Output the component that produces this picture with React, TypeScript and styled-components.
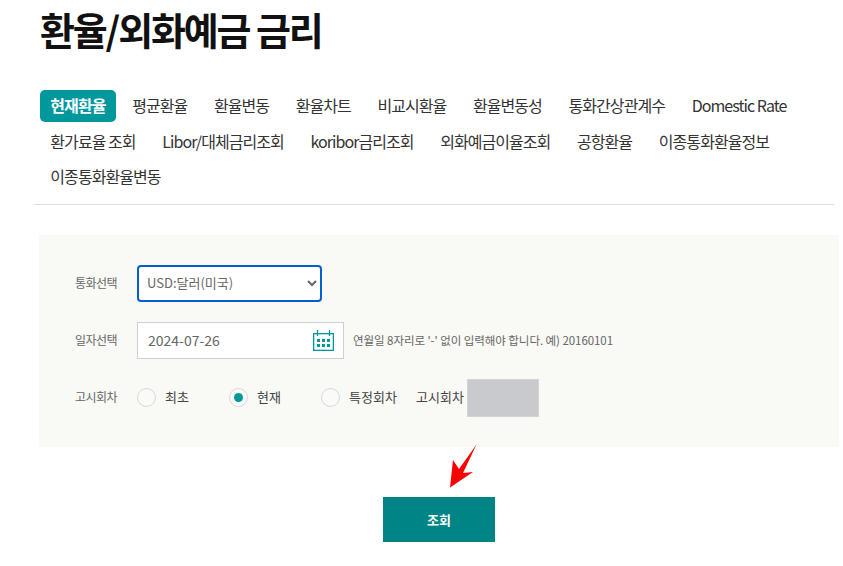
import React from "react";
import styled, { createGlobalStyle } from "styled-components";

const GlobalStyle = createGlobalStyle`
  html, body {
    margin: 0;
    padding: 0;
    background: #fff;
  }
  body {
    font-family: "Noto Sans CJK KR", "Noto Sans", sans-serif;
    overflow: hidden;
  }
`;

const Page = styled.div`
  position: relative;
  width: 843px;
  height: 566px;
  padding-top: 4px;
  box-sizing: border-box;
`;

const Title = styled.h1`
  margin: 0 0 0 40px;
  height: 86px;
  font-size: 38px;
  line-height: 50px;
  font-weight: 700;
  letter-spacing: -2.15px;
  color: #111;
`;

const TabNav = styled.div`
  display: flex;
  flex-wrap: wrap;
  width: 800px;
  box-sizing: border-box;
  margin-left: 34px;
  padding: 0 0 7px 6px;
  border-bottom: 1px solid #ddd;
`;

const Tab = styled.a<{ $active?: boolean }>`
  height: 32px;
  margin: 0 6px 3.5px 0;
  padding: 0 10.35px;
  border-radius: 5px;
  font-size: 16px;
  line-height: 30px;
  letter-spacing: -0.95px;
  font-weight: ${({ $active }) => ($active ? 700 : 400)};
  color: ${({ $active }) => ($active ? "#fff" : "#333")};
  background: ${({ $active }) => ($active ? "#00989d" : "transparent")};
`;

const Panel = styled.div`
  display: flex;
  flex-direction: column;
  gap: 20px;
  width: 800px;
  height: 212px;
  box-sizing: border-box;
  margin: 30px 0 0 39px;
  padding: 30px 0 0 36px;
  background: #f9f9f6;
`;

const Row = styled.div`
  display: flex;
  align-items: center;
`;

const Label = styled.span`
  width: 62px;
  padding-bottom: 2px;
  font-size: 12px;
  letter-spacing: -0.5px;
  color: #666;
`;

const CurrencySelect = styled.select`
  width: 185px;
  height: 37px;
  box-sizing: border-box;
  padding: 0 4px 2px 4px;
  border: 2px solid #0060d0;
  border-radius: 4px;
  background: #fff;
  font-family: inherit;
  font-size: 13px;
  color: #666;
  outline: none;
`;

const DateBox = styled.div`
  display: flex;
  align-items: center;
  justify-content: space-between;
  width: 207px;
  height: 37px;
  box-sizing: border-box;
  padding: 0 9px 0 10px;
  border: 1px solid #d0d0d0;
  background: #fff;
  font-size: 14px;
  line-height: 33px;
  color: #666;
`;

const Hint = styled.span`
  margin-left: 9px;
  padding-bottom: 1px;
  font-size: 11.5px;
  letter-spacing: -0.06px;
  color: #666;
`;

const RadioItem = styled.label`
  display: flex;
  align-items: center;
  gap: 9px;
  width: 92px;
  font-size: 13px;
  color: #444;
`;

const RadioText = styled.span`
  padding-bottom: 2px;
`;

const RadioMark = styled.span<{ $checked?: boolean }>`
  display: flex;
  align-items: center;
  justify-content: center;
  width: 19px;
  height: 19px;
  box-sizing: border-box;
  border: 1px solid #d8d8d8;
  border-radius: 50%;
  background: #fafaf8;

  &::after {
    content: "";
    display: ${({ $checked }) => ($checked ? "block" : "none")};
    width: 9px;
    height: 9px;
    border-radius: 50%;
    background: #00989d;
  }
`;

const RoundLabel = styled.span`
  margin-left: 3px;
  padding-bottom: 2px;
  font-size: 13px;
  color: #444;
`;

const RoundBox = styled.div`
  width: 72px;
  height: 38px;
  box-sizing: border-box;
  margin-left: 3px;
  border: 1px solid #d2d4d6;
  background: #c8cacd;
`;

const Actions = styled.div`
  display: flex;
  justify-content: center;
  margin: 50px 0 0 35px;
`;

const SearchButton = styled.button`
  width: 112px;
  height: 45px;
  border: 0;
  background: #008485;
  font-family: inherit;
  font-size: 13px;
  font-weight: 700;
  color: #fff;
`;

const Arrow = styled.svg`
  position: absolute;
  left: 446px;
  top: 442px;
`;

const tabs = [
  "평균환율",
  "환율변동",
  "환율차트",
  "비교시환율",
  "환율변동성",
  "통화간상관계수",
  "Domestic Rate",
  "환가료율 조회",
  "Libor/대체금리조회",
  "koribor금리조회",
  "외화예금이율조회",
  "공항환율",
  "이종통화환율정보",
  "이종통화환율변동",
];

const CalendarIcon = () => (
  <svg width="21" height="21" viewBox="0 0 21 21">
    <g fill="none" stroke="#00989d" strokeWidth="1.3">
      <rect x="0.65" y="3.65" width="19.7" height="16.7" />
      <path d="M4.5 0V6M16.5 0V6" />
    </g>
    <g fill="#00989d">
      <rect x="4" y="9" width="3" height="3" />
      <rect x="9" y="9" width="3" height="3" />
      <rect x="14" y="9" width="3" height="3" />
      <rect x="4" y="14" width="3" height="3" />
      <rect x="9" y="14" width="3" height="3" />
      <rect x="14" y="14" width="3" height="3" />
    </g>
  </svg>
);

const App = () => (
  <Page>
    <GlobalStyle />
    <Title>환율/외화예금 금리</Title>
    <TabNav>
      <Tab $active>현재환율</Tab>
      {tabs.map((name) => (
        <Tab key={name}>{name}</Tab>
      ))}
    </TabNav>
    <Panel>
      <Row>
        <Label>통화선택</Label>
        <CurrencySelect defaultValue="USD">
          <option value="USD">USD:달러(미국)</option>
        </CurrencySelect>
      </Row>
      <Row>
        <Label>일자선택</Label>
        <DateBox>
          2024-07-26
          <CalendarIcon />
        </DateBox>
        <Hint>연월일 8자리로 '-' 없이 입력해야 합니다. 예) 20160101</Hint>
      </Row>
      <Row>
        <Label>고시회차</Label>
        <RadioItem>
          <RadioMark />
          <RadioText>최초</RadioText>
        </RadioItem>
        <RadioItem>
          <RadioMark $checked />
          <RadioText>현재</RadioText>
        </RadioItem>
        <RadioItem>
          <RadioMark />
          <RadioText>특정회차</RadioText>
        </RadioItem>
        <RoundLabel>고시회차</RoundLabel>
        <RoundBox />
      </Row>
    </Panel>
    <Actions>
      <SearchButton>조회</SearchButton>
    </Actions>
    <Arrow width="34" height="48" viewBox="0 0 34 48">
      <path d="M30.5 2.5L17 31L27 30L4 45.5L7 18L13 27Z" fill="#f00" />
    </Arrow>
  </Page>
);

export default App;
